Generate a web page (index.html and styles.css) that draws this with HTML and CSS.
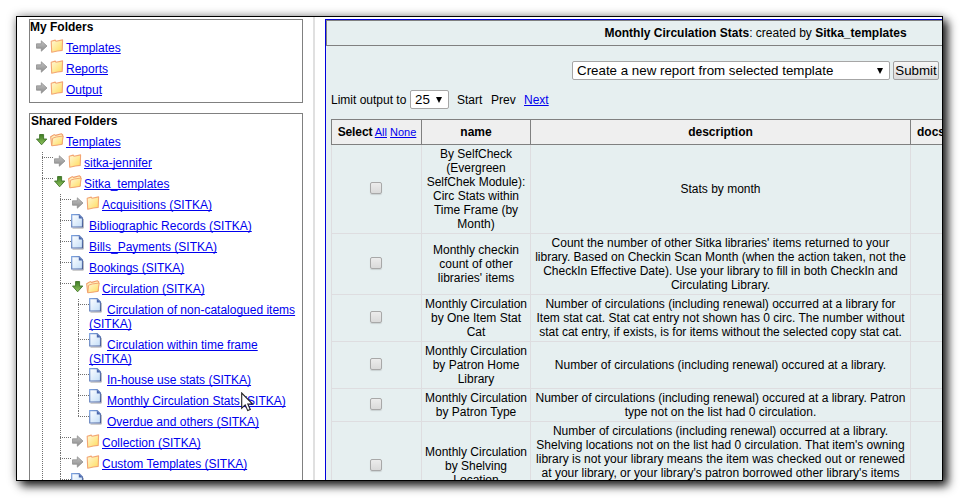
FILE: index.html
```
<!DOCTYPE html>
<html lang="en">
<head>
<meta charset="utf-8">
<title>Reports</title>
<link rel="stylesheet" href="styles.css">
</head>
<body>
<svg class="defs" width="0" height="0">
  <defs>
    <linearGradient id="gf" x1="0" y1="0" x2="1" y2="1"><stop offset="0" stop-color="#fff8d8"/><stop offset="1" stop-color="#ffdc5c"/></linearGradient>
    <linearGradient id="gp" x1="0" y1="0" x2="1" y2="1"><stop offset="0" stop-color="#ffffff"/><stop offset="1" stop-color="#c3def8"/></linearGradient>
    <linearGradient id="gs" x1="0" y1="0" x2="1" y2="1"><stop offset="0" stop-color="#7ba2e0"/><stop offset="1" stop-color="#4a5c94"/></linearGradient>
    <linearGradient id="gg" x1="0" y1="0" x2="0" y2="1"><stop offset="0" stop-color="#3f7d25"/><stop offset="1" stop-color="#8fc25c"/></linearGradient>
    <linearGradient id="ga" x1="0" y1="0" x2="0" y2="1"><stop offset="0" stop-color="#c2c2c2"/><stop offset="1" stop-color="#8c8c8c"/></linearGradient>
    <symbol id="right" viewBox="0 0 12 12"><path d="M.5 3.8H5.3V.8L11 6 5.3 11.2V8.2H.5Z" fill="url(#ga)" stroke="#8f8f8f" stroke-width=".8"/></symbol>
    <symbol id="down" viewBox="0 0 12 12"><path d="M3.6.5H7.6V5H10.8L5.6 10.8.5 5H3.6Z" fill="url(#gg)" stroke="#3f7428" stroke-width=".9"/></symbol>
    <symbol id="folder" viewBox="0 0 14 14"><path d="M1.2 2.2 5.2 1.1 6 2.3 12.6.9 12.2 11.4 7.4 12 1.7 13.2Z" fill="url(#gf)" stroke="#f3a673" stroke-width="1.1" stroke-linejoin="round"/></symbol>
    <symbol id="open" viewBox="0 0 14 14"><path d="M1.6 12.2.7 3.7 4.2 1.6 5.5 2.4 11.5.8 12.7 1.8 12.2 11 7 11.8Z" fill="#fff0bd" stroke="#f19b68" stroke-width="1.1" stroke-linejoin="round"/><path d="M1.8 12.8 2.6 5.2 6.2 4 13.2 3 12 11.4Z" fill="url(#gf)" stroke="#f3a673" stroke-linejoin="round"/></symbol>
    <symbol id="page" viewBox="0 0 13 15"><path d="M1.5 14.2H12.3V5" fill="none" stroke="#b8b8b8"/><path d="M.7.7H8.2L11.5 4V13H.7Z" fill="url(#gp)" stroke="url(#gs)" stroke-width="1.2"/><path d="M7.8.8V4.4H11.5Z" fill="#4b68ad"/></symbol>
  </defs>
</svg>
<div class="window">
  <div class="side">
    <div class="box mine">
      <h2>My Folders</h2>
      <ul class="root">
        <li><div class="row"><svg class="arw"><use href="#right"/></svg><svg class="fld"><use href="#folder"/></svg><a>Templates</a></div></li>
        <li><div class="row"><svg class="arw"><use href="#right"/></svg><svg class="fld"><use href="#folder"/></svg><a>Reports</a></div></li>
        <li><div class="row"><svg class="arw"><use href="#right"/></svg><svg class="fld"><use href="#folder"/></svg><a>Output</a></div></li>
      </ul>
    </div>
    <div class="box shared">
      <h2>Shared Folders</h2>
      <ul class="root">
        <li><div class="row"><svg class="arw"><use href="#down"/></svg><svg class="fld"><use href="#open"/></svg><a>Templates</a></div>
          <ul class="sub">
            <li><div class="row"><svg class="arw"><use href="#right"/></svg><svg class="fld"><use href="#folder"/></svg><a>sitka-jennifer</a></div></li>
            <li><div class="row"><svg class="arw"><use href="#down"/></svg><svg class="fld"><use href="#open"/></svg><a>Sitka_templates</a></div>
              <ul class="sub">
                <li><div class="row"><svg class="arw"><use href="#right"/></svg><svg class="fld"><use href="#folder"/></svg><a>Acquisitions (SITKA)</a></div></li>
                <li><div class="row file"><svg class="doc"><use href="#page"/></svg><a>Bibliographic Records (SITKA)</a></div></li>
                <li><div class="row file"><svg class="doc"><use href="#page"/></svg><a>Bills_Payments (SITKA)</a></div></li>
                <li><div class="row file"><svg class="doc"><use href="#page"/></svg><a>Bookings (SITKA)</a></div></li>
                <li><div class="row"><svg class="arw"><use href="#down"/></svg><svg class="fld"><use href="#open"/></svg><a>Circulation (SITKA)</a></div>
                  <ul class="sub">
                    <li><div class="row file"><svg class="doc"><use href="#page"/></svg><a>Circulation of non-catalogued items (SITKA)</a></div></li>
                    <li><div class="row file"><svg class="doc"><use href="#page"/></svg><a>Circulation within time frame<br>(SITKA)</a></div></li>
                    <li><div class="row file"><svg class="doc"><use href="#page"/></svg><a>In-house use stats (SITKA)</a></div></li>
                    <li><div class="row file"><svg class="doc"><use href="#page"/></svg><a>Monthly Circulation Stats (SITKA)</a></div></li>
                    <li class="end"><div class="row file"><svg class="doc"><use href="#page"/></svg><a>Overdue and others (SITKA)</a></div></li>
                  </ul>
                </li>
                <li><div class="row"><svg class="arw"><use href="#right"/></svg><svg class="fld"><use href="#folder"/></svg><a>Collection (SITKA)</a></div></li>
                <li><div class="row"><svg class="arw"><use href="#right"/></svg><svg class="fld"><use href="#folder"/></svg><a>Custom Templates (SITKA)</a></div></li>
                <li><div class="row file"><svg class="doc"><use href="#page"/></svg></div></li>
              </ul>
            </li>
          </ul>
        </li>
      </ul>
    </div>
  </div>
  <div class="main">
    <div class="panel">
      <div class="head"><b>Monthly Circulation Stats</b>: created by <b>Sitka_templates</b></div>
      <div class="action"><span class="select wide"><span>Create a new report from selected template</span><i></i></span><span class="button">Submit</span></div>
      <div class="pager"><span class="lim">Limit output to</span><span class="select num"><span>25</span><i></i></span><span class="start">Start</span><span class="prev">Prev</span><a>Next</a></div>
      <table>
        <colgroup><col class="c1"><col class="c2"><col class="c3"><col class="c4"></colgroup>
        <thead><tr><th><span class="sel">Select</span> <small><a>All</a> <a>None</a></small></th><th>name</th><th>description</th><th class="docs">docs</th></tr></thead>
        <tbody>
          <tr class="h6"><td><span class="check"></span></td><td>By SelfCheck<br>(Evergreen<br>SelfChek Module):<br>Circ Stats within<br>Time Frame (by<br>Month)</td><td>Stats by month</td><td></td></tr>
          <tr class="h4"><td><span class="check"></span></td><td>Monthly checkin<br>count of other<br>libraries' items</td><td>Count the number of other Sitka libraries' items returned to your<br>library. Based on Checkin Scan Month (when the action taken, not the<br>CheckIn Effective Date). Use your library to fill in both CheckIn and<br>Circulating Library.</td><td></td></tr>
          <tr class="h3"><td><span class="check"></span></td><td>Monthly Circulation<br>by One Item Stat<br>Cat</td><td>Number of circulations (including renewal) occurred at a library for<br>Item stat cat. Stat cat entry not shown has 0 circ. The number without<br>stat cat entry, if exists, is for items without the selected copy stat cat.</td><td></td></tr>
          <tr class="h3"><td><span class="check"></span></td><td>Monthly Circulation<br>by Patron Home<br>Library</td><td>Number of circulations (including renewal) occured at a library.</td><td></td></tr>
          <tr class="h2"><td><span class="check"></span></td><td>Monthly Circulation<br>by Patron Type</td><td>Number of circulations (including renewal) occured at a library. Patron<br>type not on the list had 0 circulation.</td><td></td></tr>
          <tr class="h6"><td><span class="check"></span></td><td>Monthly Circulation<br>by Shelving<br>Location</td><td class="top">Number of circulations (including renewal) occurred at a library.<br>Shelving locations not on the list had 0 circulation. That item's owning<br>library is not your library means the item was checked out or renewed<br>at your library, or your library's patron borrowed other library's items</td><td></td></tr>
        </tbody>
      </table>
    </div>
  </div>
  <svg class="cursor" viewBox="0 0 13 20"><path d="M.7 1V16.2L4.2 12.9 6.7 18.6 9.3 17.5 6.8 12H11.6Z" fill="#fff" stroke="#222" stroke-width="1.1"/></svg>
</div>
</body>
</html>
```
FILE: styles.css
```
* { box-sizing: border-box; }
body {
  margin: 0;
  padding: 16px;
  height: 498px;
  overflow: hidden;
  background: #fff;
  color: #000;
  font: 12px/14px "Liberation Sans", Arial, sans-serif;
}
.defs { position: absolute; }
a { color: #0000ee; text-decoration: underline; text-decoration-skip-ink: none; }
.window {
  position: relative;
  display: flex;
  width: 927px;
  height: 465px;
  overflow: hidden;
  border: 1px solid #000;
  background: #fff;
  box-shadow: 5px 5px 9px rgba(0, 0, 0, .85), 0 0 9px rgba(0, 0, 0, .35);
}
.side {
  flex: none;
  width: 298px;
  padding: 2px 0 0 12px;
  border-right: 2px solid #e0e0e0;
}
.box { width: 274px; border: 1px solid #808080; }
.mine { height: 84px; }
.shared { height: 400px; margin-top: 10px; }
h2 { margin: 0; height: 17px; font-size: 12px; line-height: 14px; }
.shared h2 { padding-left: 1px; letter-spacing: -.07px; }
ul { margin: 0; padding: 0; list-style: none; }
.root > li { padding-left: 6px; }
.sub { margin: -3px 0 0 6px; padding-top: 3px; }
.sub > li {
  padding-left: 12px;
  background:
    repeating-linear-gradient(to bottom, #707070 0 1px, transparent 1px 2px) 0 0 / 1px 100% no-repeat,
    repeating-linear-gradient(to right, #707070 0 1px, transparent 1px 2px) 0 5px / 11px 1px no-repeat;
}
.sub > li.end { background-size: 1px 6px, 11px 1px; }
.row { min-height: 21px; padding: 4px 0 3px; }
.file { margin-left: -1px; }
.row svg { float: left; }
.arw { width: 12px; height: 12px; margin: -1px 2px 0 0; }
.fld { width: 14px; height: 14px; margin: -2px 2px 0 0; }
.doc { width: 13px; height: 15px; margin: -5px 5px 0 0; }
.main { flex: none; width: 900px; padding: 2px 0 0 10px; }
.panel {
  width: 861px;
  height: 520px;
  border: 1px solid #0000dd;
  background: #e6eff0;
}
.head { height: 26px; padding-top: 5px; border: 1px solid #808080; text-align: center; }
.action { display: flex; gap: 3px; margin: 15px 0 0 246px; }
.select {
  display: flex;
  align-items: center;
  justify-content: space-between;
  height: 19px;
  padding: 0 4px;
  border: 1px solid #a6a6a6;
  border-radius: 2px;
  background: #fff;
  font-size: 13.33px;
}
.select i { border: 3px solid transparent; border-top: 6px solid #000; border-bottom: 0; }
.wide { width: 318px; padding-right: 6px; }
.num { width: 39px; padding-right: 6px; }
.button {
  width: 46px;
  height: 19px;
  border: 1px solid #a0a0a0;
  border-radius: 2px;
  background: linear-gradient(#f6f6f6, #dcdcdc);
  font-size: 13.33px;
  line-height: 17px;
  text-align: center;
}
.pager { display: flex; align-items: center; height: 19px; margin: 10px 0 10px 5px; }
.lim { width: 79px; }
.start { width: 34px; margin-left: 8px; }
.prev { width: 33px; }
table {
  width: 850px;
  margin-left: 5px;
  border-collapse: collapse;
  table-layout: fixed;
}
.c1 { width: 90px; }
.c2 { width: 109px; }
.c3 { width: 380px; }
th { height: 25px; padding: 0; border: 1px solid #808080; background: #efefef; }
th small { font-size: 11px; font-weight: normal; }
.sel { margin: 0 -1px 0 1px; letter-spacing: -.1px; }
th.docs { padding-left: 6px; text-align: left; }
td { padding: 2px 0; border: 1px solid #dedde0; text-align: center; white-space: nowrap; }
td.top { vertical-align: top; }
.h6 { height: 89px; }
.h4 { height: 61px; }
.h3 { height: 47px; }
.h2 { height: 33px; }
.check {
  display: block;
  width: 12px;
  height: 12px;
  margin: -2px 0 0 38px;
  border: 1px solid #a8a8a8;
  border-radius: 2px;
  background: linear-gradient(#ececec, #dadada);
  box-shadow: 0 1px 1px rgba(0, 0, 0, .12);
}
.cursor { position: absolute; left: 224px; top: 375px; width: 13px; height: 20px; }
```
